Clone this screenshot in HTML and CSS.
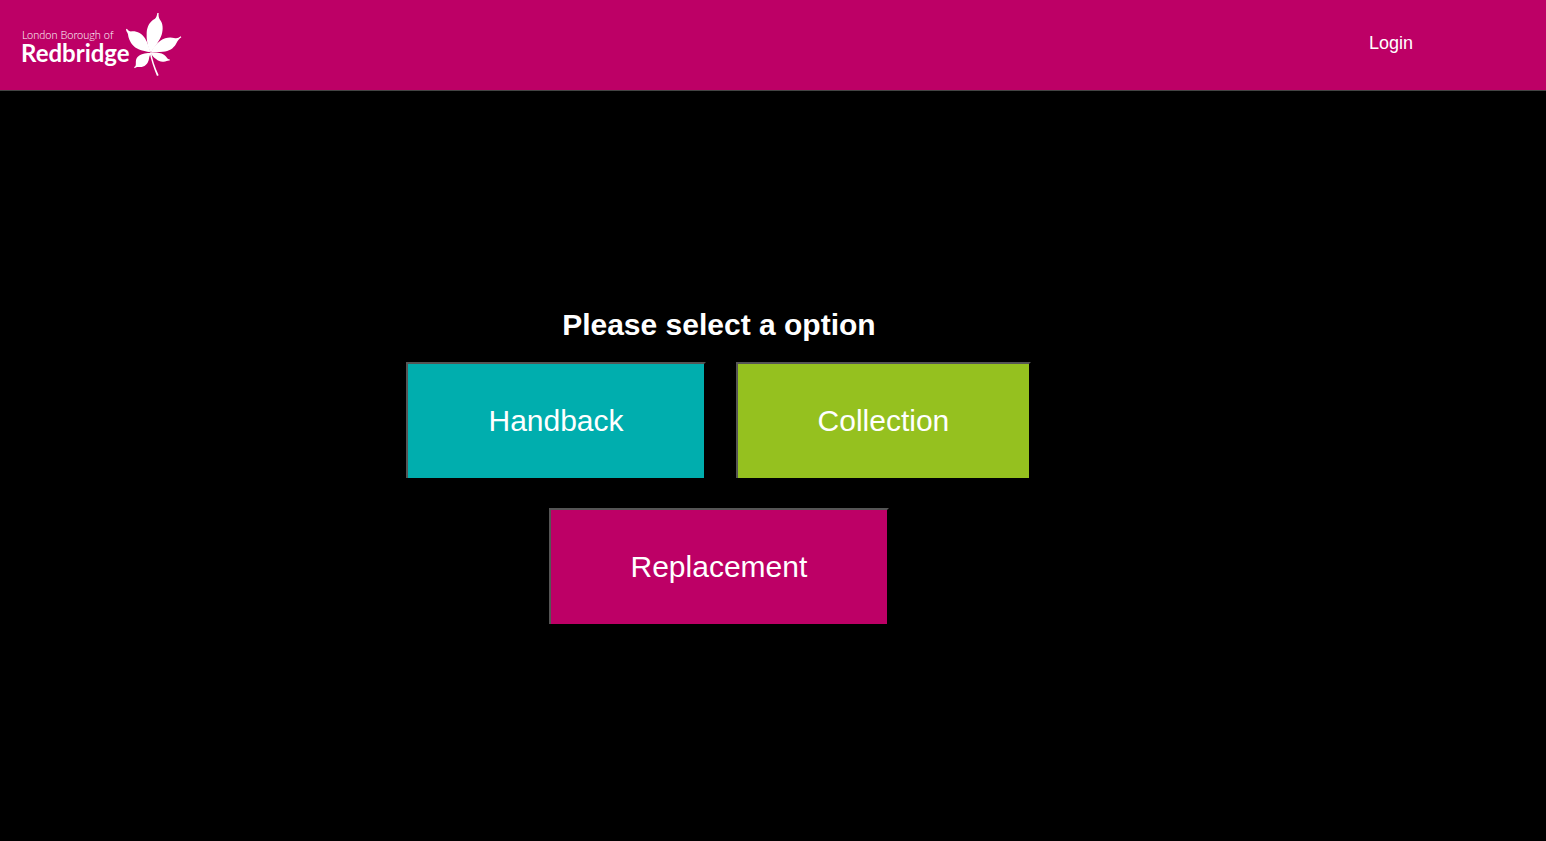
FILE: index.html
```html
<!DOCTYPE html>
<html lang="en">
<head>
<meta charset="utf-8">
<title>London Borough of Redbridge</title>
<link rel="stylesheet" href="styles.css">
</head>
<body>
<header class="header">
  <svg class="logo" viewBox="0 0 200 90" role="img" aria-label="London Borough of Redbridge">
    <text class="logo-small" x="22" y="39">London Borough of</text>
    <text class="logo-large" x="21" y="62">Redbridge</text>
    <g transform="translate(120 8) scale(.3333)">
      <path d="M90 131C82 112 79 94 80 74C81 55 91 38 105 32C110 28 111 21 112 15L116 15C115 23 116 29 120 35C129 46 130 63 125 80C119 99 105 113 95 131Z"/>
      <path d="M87 132C74 130 53 126 41 114C29 102 25 89 24 79C22 73 18 69 18 64L21 62C25 68 29 71 36 70C50 69 66 76 75 91C83 104 87 119 91 131Z"/>
      <path d="M94 131C99 118 108 108 121 98C134 89 150 86 162 90C171 92 176 90 182 85L184 88C177 92 173 99 168 108C160 122 147 130 129 131C115 132 105 132 94 134Z"/>
      <path d="M94 134C107 133 121 134 132 140C140 146 142 154 149 154L149 158C143 157 138 162 128 161C114 160 101 149 93 137Z"/>
      <path d="M89 135C76 135 60 138 52 148C44 158 50 169 46 175L42 178L45 181C50 175 55 178 65 177C78 174 85 164 87 152C88 145 90 141 93 136Z"/>
      <path d="M89 134L94 132C96 153 105 178 116 202L111 204C101 179 93 156 89 134Z"/>
    </g>
  </svg>
  <a class="login" href="#">Login</a>
</header>
<main class="main">
  <h1 class="title">Please select a option</h1>
  <div class="row">
    <button class="option teal" type="button">Handback</button>
    <button class="option green" type="button">Collection</button>
  </div>
  <div class="row">
    <button class="option pink" type="button">Replacement</button>
  </div>
</main>
</body>
</html>
```
FILE: styles.css
```css
body {
  margin: 0;
  background: #000;
  color: #fff;
  font-family: Arial, "Liberation Sans", sans-serif;
}

.header {
  display: flex;
  align-items: center;
  justify-content: space-between;
  padding-right: 133px;
  background: #bd0066;
  border-bottom: 1px solid #444;
}

.logo {
  display: block;
  width: 200px;
  height: 90px;
  fill: #fff;
}

.logo-small {
  font: 300 11px Lato, sans-serif;
}

.logo-large {
  font: 700 24px Lato, sans-serif;
}

.login {
  padding-bottom: 4px;
  color: #fff;
  font-size: 18px;
  text-decoration: none;
}

.main {
  display: flex;
  flex-direction: column;
  align-items: center;
  gap: 30px;
  margin-right: 7%;
  padding-top: 216px;
}

.title {
  margin: 0 0 -10px;
  font-size: 30px;
  line-height: 35px;
}

.row {
  display: flex;
  gap: 30px;
}

.option {
  padding: 40px 80px;
  border: solid;
  border-width: 2px 2px 0;
  border-color: #555 #000 #000 #555;
  border-radius: 0;
  color: #fff;
  font: 30px/34px Arial, "Liberation Sans", sans-serif;
}

.teal {
  background: #00aeae;
}

.green {
  background: #95c11f;
}

.pink {
  background: #bd0066;
}
```
